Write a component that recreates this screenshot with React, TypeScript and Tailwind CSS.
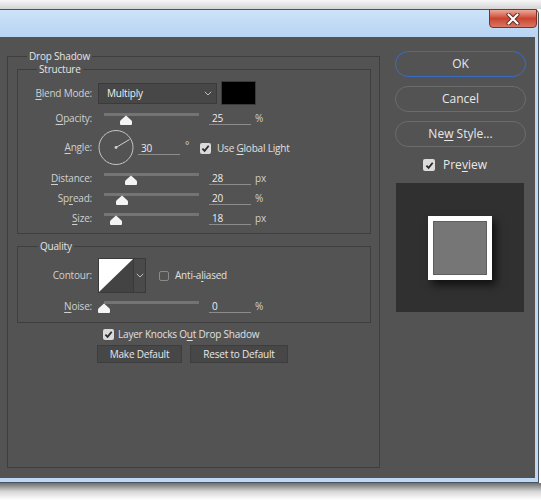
import React from "react";

function U({ children }: { children: React.ReactNode }) {
  return <span className="underline underline-offset-[2px] decoration-1">{children}</span>;
}

function Thumb() {
  return (
    <svg width="12" height="10" viewBox="0 0 12 10">
      <path
        d="M6 0.4 L11.3 5.2 Q12 5.9 12 7 V9 Q12 10 11 10 H1 Q0 10 0 9 V7 Q0 5.9 0.7 5.2 Z"
        fill="#f4f4f4"
      />
    </svg>
  );
}

function Chevron() {
  return (
    <svg width="8" height="5" viewBox="0 0 8 5">
      <path d="M0.8 0.8 L4 4 L7.2 0.8" stroke="#bdbdbd" strokeWidth="1" fill="none" />
    </svg>
  );
}

function CheckOn({ big }: { big?: boolean }) {
  return (
    <div
      className={
        big
          ? "w-[12px] h-[12px] rounded-[2px] bg-[#dcdcdc] flex items-center justify-center shrink-0"
          : "w-[11px] h-[11px] rounded-[2px] bg-[#dadada] flex items-center justify-center shrink-0"
      }
    >
      <svg width="9" height="9" viewBox="0 0 9 9">
        <path d="M1.4 4.6 L3.6 6.9 L7.7 1.8" stroke="#2b2b2b" strokeWidth="1.8" fill="none" />
      </svg>
    </div>
  );
}

function Slider({ left }: { left: number }) {
  return (
    <div className="relative ml-[6px] w-[107px] h-[13px] shrink-0">
      <div className="ml-[6px] w-[95px] h-[3px] bg-[#747474]" />
      <div className="absolute top-[2px] flex" style={{ left }}>
        <Thumb />
      </div>
    </div>
  );
}

function SliderRow({
  mt,
  label,
  left,
  value,
  unit,
}: {
  mt: string;
  label: React.ReactNode;
  left: number;
  value: string;
  unit: string;
}) {
  return (
    <div className={`${mt} flex items-start h-[13px]`}>
      <div className="w-[74px] text-right leading-[11px]">{label}</div>
      <Slider left={left} />
      <div className="ml-[4px] w-[42px] h-[12px] border-b border-[#8c8c8c] pl-[3px] leading-[11px] text-[#ececec]">
        {value}
      </div>
      <div className="ml-[4px] leading-[11px]">{unit}</div>
    </div>
  );
}

function CloseBtn() {
  return (
    <div className="-mt-[1px] w-[48px] h-[19px] rounded-b-[4px] border border-[#7a3327] bg-gradient-to-b from-[#eaa99c] via-[#c9442f] to-[#d77563] flex items-center justify-center">
      <svg width="16" height="12" viewBox="0 0 16 12">
        <path d="M3.5 1.5 L12.5 10.5 M12.5 1.5 L3.5 10.5" stroke="#5a2a22" strokeWidth="4" strokeLinecap="round" />
        <path d="M3.5 1.5 L12.5 10.5 M12.5 1.5 L3.5 10.5" stroke="#ffffff" strokeWidth="2.2" strokeLinecap="round" />
      </svg>
    </div>
  );
}

function Dial() {
  return (
    <svg width="36" height="35" viewBox="0 0 36 35" className="ml-[6px] shrink-0">
      <circle cx="18" cy="17.5" r="17" stroke="#c4c4c4" strokeWidth="1" fill="none" />
      <circle cx="18" cy="17.5" r="1.4" fill="#cfcfcf" />
      <path d="M18 17.5 L31.5 9.5" stroke="#d0d0d0" strokeWidth="1" />
    </svg>
  );
}

export default function App() {
  return (
    <div className="w-[541px] h-[500px] overflow-hidden bg-white font-['Open_Sans','Noto_Sans',sans-serif] text-[10px] text-[#d0d0d0]">
      <div className="h-[9px] bg-gradient-to-b from-[#f8f8f8] to-[#d4d4d4]" />
      <div className="w-[539px] h-[474px] border-t border-r border-b border-[#4a5460] rounded-tr-[5px] bg-[#bcd8f4] flex flex-col">
        <div className="h-[27px] shrink-0 flex justify-end pr-[1px] bg-gradient-to-b from-[#cde3f9] to-[#b7d4f1] rounded-tr-[5px]">
          <CloseBtn />
        </div>
        <div className="flex-1 pr-[3px] pb-[4px] flex">
          <div className="flex-1 bg-[#535353] flex items-start">
            {/* Left: Drop Shadow group */}
            <fieldset className="ml-[7px] mt-[13px] w-[373px] h-[418px] shrink-0 border border-[#3e3e3e] pl-[9px] pr-[8px] tracking-[-0.2px]">
              <legend className="ml-[10px] px-[2px] leading-[13px] text-[10px] text-[#e4e4e4]">Drop Shadow</legend>
              <div className="flex flex-col">
                {/* Structure */}
                <fieldset className="w-[354px] h-[171px] border border-[#3e3e3e]">
                  <legend className="ml-[19px] px-[2px] leading-[13px] text-[10px] text-[#e4e4e4]">Structure</legend>
                  <div className="flex flex-col">
                    <div className="mt-[5px] h-[24px] flex items-center">
                      <div className="w-[74px] text-right">
                        <U>B</U>lend Mode:
                      </div>
                      <div className="ml-[6px] w-[119px] h-[21px] bg-[#474747] border border-[#3b3b3b] flex items-center justify-between pl-[8px] pr-[4px] text-[#f0f0f0]">
                        <span>Multiply</span>
                        <Chevron />
                      </div>
                      <div className="ml-[4px] w-[35px] h-[24px] bg-black border border-[#3a3a3a]" />
                    </div>
                    <SliderRow
                      mt="mt-[8px]"
                      label={
                        <>
                          <U>O</U>pacity:
                        </>
                      }
                      left={22}
                      value="25"
                      unit="%"
                    />
                    <div className="mt-[4px] h-[35px] flex items-start">
                      <div className="w-[74px] text-right leading-[11px] mt-[12px]">
                        <U>A</U>ngle:
                      </div>
                      <Dial />
                      <div className="ml-[4px] mt-[13px] w-[42px] h-[12px] border-b border-[#8c8c8c] pl-[3px] leading-[11px] text-[#ececec]">
                        30
                      </div>
                      <div className="w-[20px] pl-[5px] mt-[10px] leading-[11px]">°</div>
                      <div className="mt-[13px] flex items-center">
                        <CheckOn />
                        <span className="ml-[6px] leading-[11px] text-[#e0e0e0]">
                          Use <U>G</U>lobal Light
                        </span>
                      </div>
                    </div>
                    <SliderRow
                      mt="mt-[8px]"
                      label={
                        <>
                          <U>D</U>istance:
                        </>
                      }
                      left={27}
                      value="28"
                      unit="px"
                    />
                    <SliderRow
                      mt="mt-[7px]"
                      label={
                        <>
                          Sp<U>r</U>ead:
                        </>
                      }
                      left={18}
                      value="20"
                      unit="%"
                    />
                    <SliderRow
                      mt="mt-[7px]"
                      label={
                        <>
                          <U>S</U>ize:
                        </>
                      }
                      left={12}
                      value="18"
                      unit="px"
                    />
                  </div>
                </fieldset>

                {/* Quality */}
                <fieldset className="mt-[6px] w-[354px] h-[83px] border border-[#3e3e3e]">
                  <legend className="ml-[20px] px-[2px] leading-[13px] text-[10px] text-[#e4e4e4]">Quality</legend>
                  <div className="flex flex-col">
                    <div className="mt-[5px] h-[35px] flex items-center">
                      <div className="w-[74px] text-right">Contour:</div>
                      <div className="ml-[6px] h-[35px] flex border border-[#3a3a3a]">
                        <svg width="34" height="33" viewBox="0 0 34 33">
                          <rect width="34" height="33" fill="#434343" />
                          <polygon points="0,0 34,0 0,33" fill="#ffffff" />
                        </svg>
                        <div className="w-[12px] bg-[#4a4a4a] border-l border-[#3a3a3a] flex items-center justify-center">
                          <Chevron />
                        </div>
                      </div>
                      <div className="ml-[13px] w-[10px] h-[10px] rounded-[2px] border border-[#8a8a8a]" />
                      <span className="ml-[6px] text-[#e0e0e0]">
                        Anti-a<U>l</U>iased
                      </span>
                    </div>
                    <SliderRow
                      mt="mt-[8px]"
                      label={
                        <>
                          <U>N</U>oise:
                        </>
                      }
                      left={0}
                      value="0"
                      unit="%"
                    />
                  </div>
                </fieldset>

                <div className="mt-[6px] ml-[86px] h-[11px] flex items-center">
                  <CheckOn />
                  <span className="ml-[4px] text-[#e0e0e0]">
                    Layer Knocks O<U>u</U>t Drop Shadow
                  </span>
                </div>
                <div className="mt-[5px] ml-[80px] flex gap-[8px] text-[#e8e8e8]">
                  <div className="w-[85px] h-[18px] bg-[#474747] border border-[#3d3d3d] flex items-center justify-center">
                    Make Default
                  </div>
                  <div className="w-[98px] h-[18px] bg-[#474747] border border-[#3d3d3d] flex items-center justify-center">
                    Reset to Default
                  </div>
                </div>
              </div>
            </fieldset>

            {/* Right column */}
            <div className="ml-[15px] mt-[14px] w-[131px] shrink-0 flex flex-col text-[12px] text-[#e8e8e8]">
              <div className="h-[26px] rounded-full border-[1.5px] border-[#3a6bc4] flex items-center justify-center">
                OK
              </div>
              <div className="mt-[9px] h-[26px] rounded-full border border-[#6c6c6c] flex items-center justify-center">
                Cancel
              </div>
              <div className="mt-[9px] h-[26px] rounded-full border border-[#6c6c6c] flex items-center justify-center">
                <span>
                  Ne<U>w</U> Style...
                </span>
              </div>
              <div className="mt-[12px] ml-[28px] h-[12px] flex items-center">
                <CheckOn big />
                <span className="ml-[8px]">
                  Pre<U>v</U>iew
                </span>
              </div>
              <div className="mt-[12px] ml-[1px] w-[128px] h-[129px] bg-[#303030] flex items-center justify-center">
                <div className="w-[64px] h-[64px] bg-white p-[5px] shadow-[4px_5px_8px_rgba(0,0,0,0.65)]">
                  <div className="w-full h-full bg-[#767676] border border-[#5e5e5e]" />
                </div>
              </div>
            </div>
          </div>
        </div>
      </div>
      <div className="h-[17px] bg-gradient-to-b from-[#6e6e6e] via-[#d6d6d6] to-white" />
    </div>
  );
}
